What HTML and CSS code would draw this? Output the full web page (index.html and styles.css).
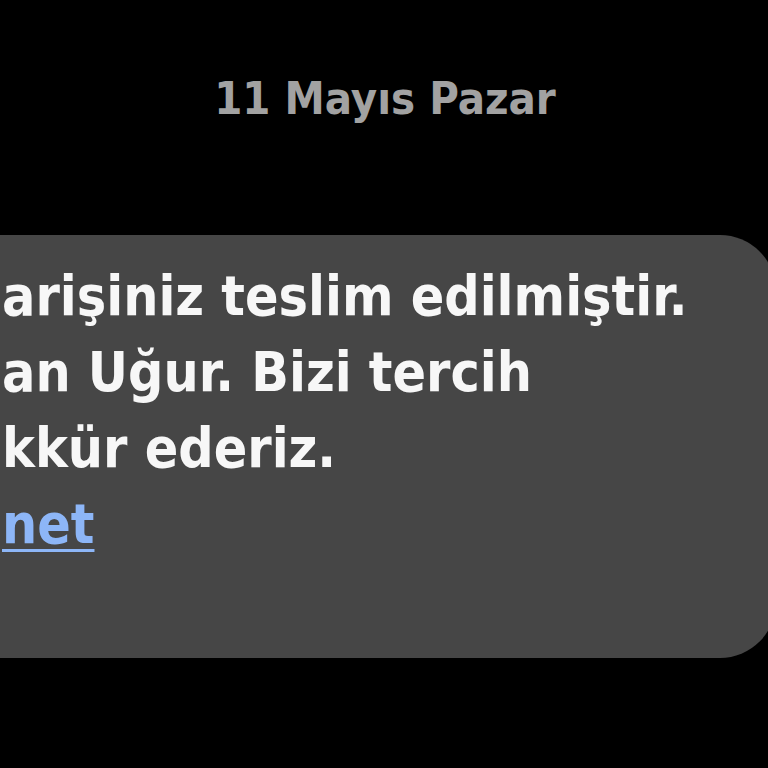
FILE: index.html
```html
<!DOCTYPE html>
<html lang="tr">
<head>
<meta charset="utf-8">
<link rel="stylesheet" href="styles.css">
</head>
<body>
<div class="screen">
  <div class="date">11 Mayıs Pazar</div>
  <div class="bubble">
    <span class="line l1">arişiniz teslim edilmiştir.</span>
    <span class="line l2">an Uğur. Bizi tercih</span>
    <span class="line l3">kkür ederiz.</span>
    <span class="line l4"><a class="link" href="#">net</a></span>
  </div>
</div>
</body>
</html>
```
FILE: styles.css
```css
html, body {
  margin: 0;
  padding: 0;
  background: #000;
}
.screen {
  width: 768px;
  height: 768px;
  overflow: hidden;
  background: #000;
  font-family: "DejaVu Sans Condensed", "DejaVu Sans", sans-serif;
  font-stretch: condensed;
  font-weight: bold;
}
.date {
  padding-top: 69px;
  height: 60px;
  line-height: 60px;
  font-size: 45px;
  color: #a2a2a2;
  text-align: center;
  padding-left: 2px;
}
.bubble {
  margin-top: 106px;
  margin-left: -100px;
  margin-right: -8px;
  height: 423px;
  box-sizing: border-box;
  padding: 23px 0 0 102px;
  background: #464646;
  border-radius: 56px;
  color: #f7f7f7;
  font-size: 55px;
  line-height: 76px;
}
.line {
  display: block;
  white-space: nowrap;
}
.link {
  color: #8db6f7;
  text-decoration: underline;
  text-decoration-thickness: 3px;
  text-underline-offset: 6px;
}
```
